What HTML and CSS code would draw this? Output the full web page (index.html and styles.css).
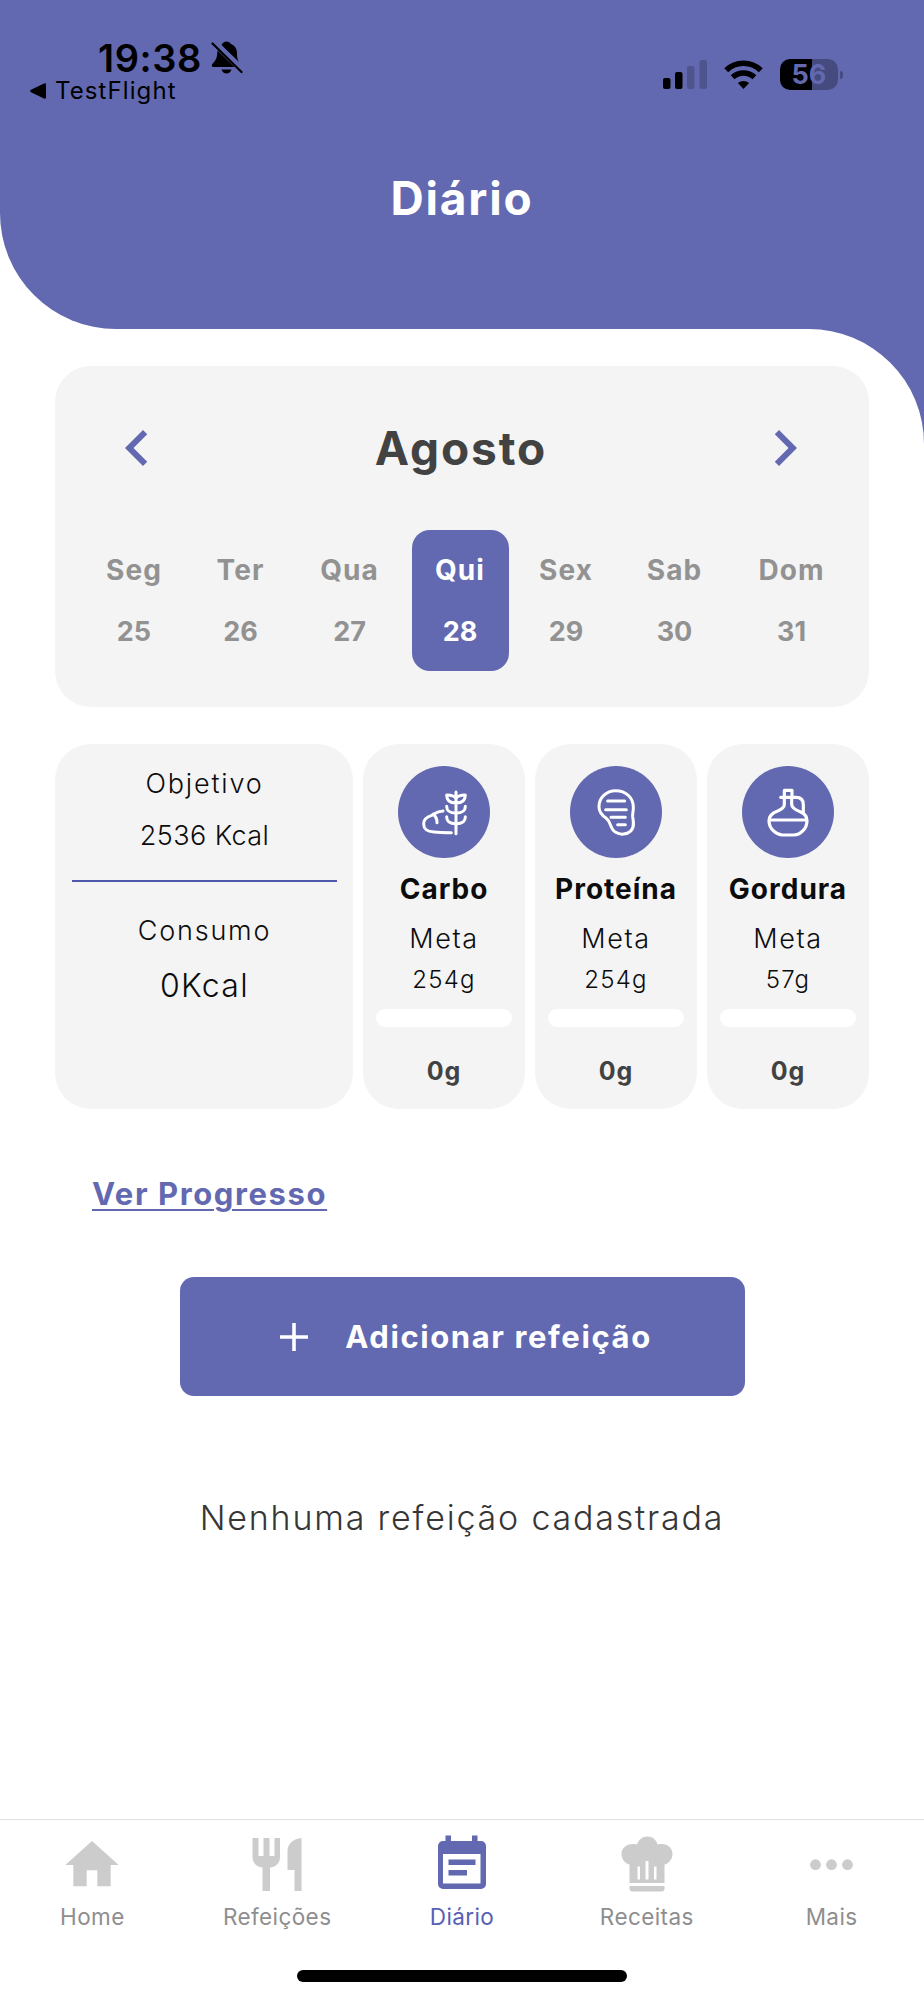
FILE: index.html
```html
<!DOCTYPE html>
<html lang="pt-BR">
<head>
  <meta charset="UTF-8">
  <meta name="viewport" content="width=device-width, initial-scale=1.0">
  <title>Diário</title>
  <link rel="stylesheet" href="styles.css">
</head>
<body>
  <div class="screen">
    <header class="header">
      <div class="status-bar">
        <div class="status-left">
          <div class="status-clock">
            <span class="time">19:38</span>
            <svg class="bell" viewBox="0 0 32 34">
              <path d="M10.500 4C11.500 1.800 13.500.5 15.500.5s3.500 1 4.500 2.500c4 1.500 6 5 6 9.500 0 4 .5 6 2 8.500zM6.500 9.500L23.500 26H2.500C.8 26 .3 24.500 1.200 23.300 4 20 5.500 18 6 14.500zM10.500 28.500h10c-.8 2.500-2.700 4-5 4s-4.200-1.500-5-4z"/>
              <path d="M1.500 2.500L30.500 31" fill="none" stroke="#000" stroke-width="2.200" stroke-linecap="round"/>
            </svg>
          </div>
          <div class="back-app">
            <svg class="back-arrow" viewBox="0 0 16 16"><path d="M1 6.800L14 .6q2-.8 2 1.200v12.400q0 2-2 1.200L1 9.200q-1.800-1.200 0-2.400z"/></svg>
            <span>TestFlight</span>
          </div>
        </div>
        <div class="status-right">
          <svg class="signal" viewBox="0 0 45 29">
            <rect x="0" y="18" width="7.500" height="11" rx="2"/>
            <rect x="12" y="12" width="7.500" height="17" rx="2"/>
            <rect x="24" y="6" width="7.500" height="23" rx="2" opacity=".2"/>
            <rect x="36.500" y="0" width="7.500" height="29" rx="2" opacity=".2"/>
          </svg>
          <svg class="wifi" viewBox="0 0 39 29">
            <path d="M19.500 29l-5.600-5.900a8.500 8.500 0 0 1 11.200 0z"/>
            <path d="M8.600 17.300a16 16 0 0 1 21.800 0M2.200 10.200a25 25 0 0 1 34.600 0" fill="none" stroke="#000" stroke-width="5.600"/>
          </svg>
          <div class="battery"><span>56</span></div>
          <i class="battery-tip"></i>
        </div>
      </div>
      <h1 class="page-title">Diário</h1>
    </header>

    <div class="sheet">
      <main class="content">
        <section class="card calendar">
          <div class="month">
            <svg class="chevron" viewBox="0 0 24 24"><path d="M15.410 7.410L14 6l-6 6 6 6 1.410-1.410L10.830 12z"/></svg>
            <h2>Agosto</h2>
            <svg class="chevron" viewBox="0 0 24 24"><path d="M10 6L8.590 7.410 13.170 12l-4.580 4.590L10 18l6-6z"/></svg>
          </div>
          <div class="week">
            <div class="day"><span class="weekday">Seg</span><span>25</span></div>
            <div class="day"><span class="weekday">Ter</span><span>26</span></div>
            <div class="day"><span class="weekday">Qua</span><span>27</span></div>
            <div class="day active"><span class="weekday">Qui</span><span>28</span></div>
            <div class="day"><span class="weekday">Sex</span><span>29</span></div>
            <div class="day"><span class="weekday">Sab</span><span>30</span></div>
            <div class="day"><span class="weekday">Dom</span><span>31</span></div>
          </div>
        </section>

        <section class="summary">
          <div class="card goal">
            <p class="goal-label">Objetivo</p>
            <p class="goal-value">2536 Kcal</p>
            <hr>
            <p class="intake-label">Consumo</p>
            <p class="intake-value">0Kcal</p>
          </div>
          <div class="card macro">
            <svg class="macro-icon" viewBox="0 0 276 276">
              <g fill="none" stroke="#fff" stroke-width="9" stroke-linecap="round" stroke-linejoin="round">
                <path d="M135 135C117 136 112 142 101 148C84 153 77 164 77 174C77 191 88 196 108 198C125 200 140 200 160 200M105 145C114 151 117 160 117 170"/>
                <path d="M174 78V203M174 98C170 88 158 87 146 87C146 103 154 111 174 111C194 111 202 103 202 87C190 87 178 88 174 98"/>
                <path d="M146 121C146 135 154 141 174 141C194 141 202 135 202 121M146 152C146 167 154 173 174 173C194 173 202 167 202 152"/>
              </g>
            </svg>
            <h3>Carbo</h3>
            <p class="meta">Meta</p>
            <p class="target">254g</p>
            <div class="progress"></div>
            <p class="eaten">0g</p>
          </div>
          <div class="card macro">
            <svg class="macro-icon" viewBox="0 0 276 276">
              <g fill="none" stroke="#fff" stroke-width="9" stroke-linecap="round" stroke-linejoin="round">
                <path d="M137 74C108 74 87 96 87 122C87 137 95 147 108 156C124 168 119 188 137 199C152 208 171 205 181 196C195 184 190 165 188 152C187 143 190 138 190 125C191 96 168 74 137 74Z"/>
                <path d="M113 105H164M107 131H169M123 154H166M143 176H166"/>
              </g>
            </svg>
            <h3>Proteína</h3>
            <p class="meta">Meta</p>
            <p class="target">254g</p>
            <div class="progress"></div>
            <p class="eaten">0g</p>
          </div>
          <div class="card macro">
            <svg class="macro-icon" viewBox="0 0 276 276">
              <g fill="none" stroke="#fff" stroke-width="9.500" stroke-linecap="round" stroke-linejoin="round">
                <path d="M127 94V73H150V94M116 94H162C176 94 184 102 184 116V138"/>
                <path d="M127 94V115C127 126 117 131 107 135C90 141 81 152 81 164C81 189 104 207 121 207H156C174 207 195 189 195 164C195 152 187 143 176 138C160 132 149 126 149 115V94M82 162H194"/>
              </g>
            </svg>
            <h3>Gordura</h3>
            <p class="meta">Meta</p>
            <p class="target">57g</p>
            <div class="progress"></div>
            <p class="eaten">0g</p>
          </div>
        </section>

        <a class="progress-link" href="#">Ver Progresso</a>

        <button class="add-meal">
          <svg class="plus" viewBox="0 0 28 28"><path d="M14 0V28M0 14H28" stroke="#fff" stroke-width="3.600"/></svg>
          <span>Adicionar refeição</span>
        </button>

        <p class="empty">Nenhuma refeição cadastrada</p>
      </main>
    </div>

    <nav class="tab-bar">
      <a class="tab" href="#">
        <svg viewBox="0 0 24 24"><path d="M10 20v-6h4v6h5v-8h3L12 3 2 12h3v8z"/></svg>
        <span>Home</span>
      </a>
      <a class="tab" href="#">
        <svg viewBox="0 0 64 64"><path d="M7.500 5h6v18h5V5h6v18h5V5h5.500v19c0 6-4 10-10 10.500V58h-7.500V34.500c-6-.5-10-5-10-10.500zM56.500 5v53h-7V37h-7V18c0-7 6-12.500 14-13z"/></svg>
        <span>Refeições</span>
      </a>
      <a class="tab active" href="#">
        <svg viewBox="0 0 64 64"><path fill-rule="evenodd" d="M15.500 2.500h5.500V8h21V2.500h5.500V8h3.500a5 5 0 0 1 5 5v38a5 5 0 0 1-5 5H13a5 5 0 0 1-5-5V13a5 5 0 0 1 5-5h2.500zM13 21v29.500h37.500V21zM18.500 26.500h27V32h-27zM18.500 37H37v5.500H18.500z"/></svg>
        <span>Diário</span>
      </a>
      <a class="tab" href="#">
        <svg viewBox="0 0 64 64">
          <path fill-rule="evenodd" d="M14.500 31.500C10 30.500 6.500 26 6.500 21c0-6.500 6-11.500 15.500-9.500C23.500 7 27.500 3.500 32.500 3.500S41.500 7 42.500 11.500C52 9.500 57.500 14.500 57.500 21c0 5-3.500 9.500-8 10.500v18.500h-35zM22.500 33.500v13h2.500v-13zM30.500 28v18.500h3V28zM39 33.500v13h2.500v-13z"/>
          <path d="M14.500 53h35v2.500a3 3 0 0 1-3 3h-29a3 3 0 0 1-3-3z"/>
        </svg>
        <span>Receitas</span>
      </a>
      <a class="tab" href="#">
        <svg viewBox="0 0 64 64"><circle cx="15.500" cy="31.700" r="5.400"/><circle cx="31.500" cy="31.700" r="5.400"/><circle cx="47.500" cy="31.700" r="5.400"/></svg>
        <span>Mais</span>
      </a>
      <div class="home-indicator"></div>
    </nav>
  </div>
</body>
</html>
```

FILE: styles.css
```css
* {
  box-sizing: border-box;
}

body {
  margin: 0;
  font-family: Inter, "Liberation Sans", sans-serif;
  background-color: #fff;
  color: #0c0c0d;
}

h1, h2, h3, p {
  margin: 0;
}

a {
  color: inherit;
}

svg {
  display: block;
}

.screen {
  display: flex;
  flex-direction: column;
  width: 924px;
  height: 2000px;
  background-color: #fff;
}

/* Header */
.header {
  height: 329px;
  background-color: #6269b1;
  border-bottom-left-radius: 116px;
}

.status-bar {
  display: flex;
  justify-content: space-between;
  height: 120px;
  color: #000;
}

.status-left {
  padding: 38px 0 0 30px;
}

.status-clock {
  display: flex;
  align-items: center;
  gap: 9px;
  height: 39px;
  padding-left: 68px;
}

.time {
  font-size: 38px;
  font-weight: 600;
  letter-spacing: 0.6px;
}

.bell {
  width: 32px;
  height: 34px;
}

.back-app {
  display: flex;
  align-items: center;
  gap: 9px;
  height: 27px;
  font-size: 24px;
  letter-spacing: 1.1px;
}

.back-arrow {
  width: 16px;
  height: 16px;
}

.status-right {
  display: flex;
  align-items: center;
  height: 31px;
  margin: 59px 81px 0 0;
}

.signal {
  width: 45px;
  height: 29px;
}

.wifi {
  width: 39px;
  height: 29px;
  margin: 0 17px 0 16px;
}

.battery {
  width: 58px;
  height: 31px;
  border-radius: 10px;
  background: linear-gradient(to right, #000 32px, #464b7f 32px);
  color: #6269b1;
  font-size: 27px;
  font-weight: 700;
  line-height: 31px;
  text-align: center;
}

.battery-tip {
  width: 3px;
  height: 8px;
  margin-left: 2px;
  border-radius: 0 4px 4px 0;
  background-color: #464b7f;
}

.page-title {
  margin-top: 48px;
  color: #fff;
  font-size: 46px;
  font-weight: 700;
  letter-spacing: 1.8px;
  line-height: 60px;
  text-align: center;
}

/* Content */
.sheet {
  flex: 1;
  background-color: #6269b1;
}

.content {
  height: 100%;
  padding: 37px 55px 0;
  background-color: #fff;
  border-top-right-radius: 115px;
}

.card {
  background-color: #f4f4f4;
  border-radius: 36px;
}

.calendar {
  height: 341px;
  padding: 46px 36px 0 29px;
}

.month {
  display: flex;
  justify-content: space-between;
  align-items: center;
  padding: 0 12px 0 17px;
}

.month h2 {
  color: #424242;
  font-size: 46px;
  font-weight: 700;
  letter-spacing: 1.9px;
}

.chevron {
  width: 72px;
  height: 72px;
  fill: #6269b1;
}

.week {
  display: grid;
  grid-template-columns: 100px 113px 105px 116px 96px 121px 113px;
  margin-top: 46px;
  justify-items: center;
}

.day {
  display: flex;
  flex-direction: column;
  align-items: center;
  width: 97px;
  height: 141px;
  padding-top: 10px;
  border-radius: 18px;
  color: #929292;
  font-size: 27px;
  font-weight: 700;
  line-height: 61px;
}

.weekday {
  font-size: 28px;
  letter-spacing: 1.1px;
}

.day.active {
  background-color: #6269b1;
  color: #fff;
}

.summary {
  display: grid;
  grid-template-columns: 298px 162px 162px 162px;
  justify-content: space-between;
  height: 365px;
  margin-top: 37px;
  text-align: center;
}

.goal {
  padding: 15px 16px 0 17px;
  font-size: 27px;
  font-weight: 300;
}

.goal-label {
  letter-spacing: 1.8px;
  line-height: 50px;
}

.goal-value {
  letter-spacing: 0.4px;
  line-height: 53px;
}

.goal hr {
  height: 2px;
  margin: 18px 0 22px;
  border: 0;
  background-color: #5058ab;
}

.intake-label {
  letter-spacing: 1.8px;
  line-height: 54px;
}

.intake-value {
  font-size: 32px;
  letter-spacing: 1.3px;
  line-height: 55px;
}

.macro {
  padding: 22px 13px 0;
}

.macro-icon {
  width: 92px;
  height: 92px;
  margin: 0 auto 6px;
  border-radius: 50%;
  background-color: #6269b1;
}

.macro h3 {
  margin: 0 -10px;
  font-size: 28px;
  font-weight: 700;
  letter-spacing: 1px;
  line-height: 50px;
}

.meta {
  font-size: 27px;
  font-weight: 300;
  letter-spacing: 1.6px;
  line-height: 49px;
}

.target {
  font-size: 24px;
  font-weight: 300;
  letter-spacing: 1.2px;
  line-height: 34px;
}

.progress {
  height: 18px;
  margin: 12px 0 24px;
  border-radius: 9px;
  background-color: #fff;
}

.eaten {
  color: #424242;
  font-size: 25px;
  font-weight: 700;
  letter-spacing: 0.8px;
  line-height: 40px;
}

.progress-link {
  display: block;
  width: fit-content;
  margin: 60px 0 0 37px;
  color: #6269b1;
  font-size: 31px;
  font-weight: 700;
  letter-spacing: 1.6px;
  line-height: 49px;
  text-decoration-thickness: 2px;
  text-underline-offset: 4px;
}

.add-meal {
  display: flex;
  justify-content: center;
  align-items: center;
  gap: 37px;
  width: 565px;
  height: 119px;
  margin: 59px auto 0;
  padding: 0 0 0 8px;
  border: none;
  border-radius: 14px;
  background-color: #6269b1;
  color: #fff;
  font-family: inherit;
  font-size: 31px;
  font-weight: 700;
  letter-spacing: 1.6px;
}

.plus {
  width: 28px;
  height: 28px;
}

.empty {
  margin-top: 97px;
  color: #363637;
  font-size: 34px;
  font-weight: 300;
  letter-spacing: 1.8px;
  line-height: 50px;
  text-align: center;
}

/* Tab bar */
.tab-bar {
  display: grid;
  grid-template-columns: repeat(5, 1fr);
  grid-template-rows: 150px 12px;
  height: 181px;
  border-top: 1.500px solid #e0e0e1;
  background-color: #fff;
}

.tab {
  display: flex;
  flex-direction: column;
  align-items: center;
  padding-top: 13px;
  color: #8e8e8f;
  font-size: 22.500px;
  letter-spacing: 0.4px;
  line-height: 40px;
  text-decoration: none;
}

.tab svg {
  width: 64px;
  height: 64px;
  fill: #ccc;
}

.tab.active {
  color: #5860b4;
}

.tab.active svg {
  fill: #6269b1;
}

.home-indicator {
  grid-column: 1 / -1;
  justify-self: center;
  width: 330px;
  border-radius: 6px;
  background-color: #000;
}
```
